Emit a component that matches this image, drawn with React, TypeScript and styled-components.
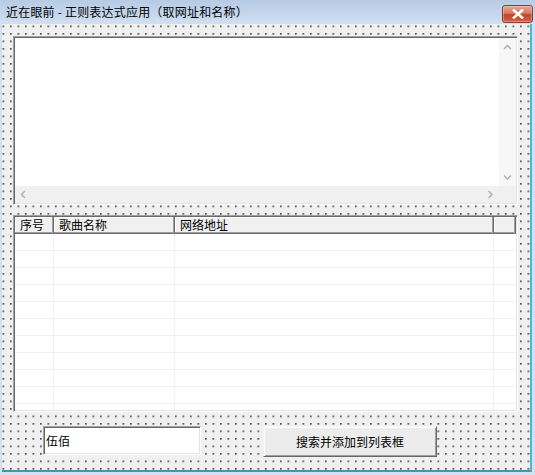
import React from "react";
import styled, { createGlobalStyle } from "styled-components";

const GlobalStyle = createGlobalStyle`
  html, body {
    margin: 0;
    padding: 0;
    background: #ffffff;
  }
  body {
    font-family: "Noto Sans CJK SC", "Liberation Sans", sans-serif;
    font-size: 12px;
    color: #000;
  }
`;

const columns = [
  { title: "序号", width: 39 },
  { title: "歌曲名称", width: 121 },
  { title: "网络地址", width: 319 },
  { title: "", width: 22 },
];

const rowCount = 11;

const Chevron = ({ dir }: { dir: "up" | "down" | "left" | "right" }) => {
  const paths = {
    up: "M1 5 L4.5 1.5 L8 5",
    down: "M1 1.5 L4.5 5 L8 1.5",
    left: "M5 1 L1.5 4.5 L5 8",
    right: "M1.5 1 L5 4.5 L1.5 8",
  };
  const vertical = dir === "up" || dir === "down";
  return (
    <svg
      width={vertical ? 9 : 7}
      height={vertical ? 7 : 9}
      viewBox={vertical ? "0 0 9 7" : "0 0 7 9"}
    >
      <path d={paths[dir]} fill="none" stroke="#b4b4b4" strokeWidth="1.6" />
    </svg>
  );
};

const App = () => {
  return (
    <>
      <GlobalStyle />
      <Window>
        <TitleBar>
          <Title>近在眼前 - 正则表达式应用（取网址和名称）</Title>
          <CloseButton>
            <svg width="12" height="10" viewBox="0 0 12 10">
              <path
                d="M2 1.5 L10 8.5 M10 1.5 L2 8.5"
                stroke="#ffffff"
                strokeWidth="2.6"
                strokeLinecap="square"
              />
            </svg>
          </CloseButton>
        </TitleBar>
        <Client>
          <MultiText>
            <TextContent />
            <VScroll>
              <ScrollButton>
                <Chevron dir="up" />
              </ScrollButton>
              <ScrollButton>
                <Chevron dir="down" />
              </ScrollButton>
            </VScroll>
            <HScroll>
              <ScrollButton>
                <Chevron dir="left" />
              </ScrollButton>
              <ScrollButton>
                <Chevron dir="right" />
              </ScrollButton>
            </HScroll>
            <Corner />
          </MultiText>

          <ListView>
            <HeaderRow>
              {columns.map((c, i) => (
                <HeaderCell key={i} $width={c.width}>
                  {c.title}
                </HeaderCell>
              ))}
            </HeaderRow>
            <ListBody>
              {Array.from({ length: rowCount }).map((_, r) => (
                <ListRow key={r}>
                  {columns.map((c, i) => (
                    <ListCell key={i} $width={c.width} $last={i === columns.length - 1} />
                  ))}
                </ListRow>
              ))}
            </ListBody>
          </ListView>

          <BottomRow>
            <TextBox>伍佰</TextBox>
            <Button>搜索并添加到列表框</Button>
          </BottomRow>
        </Client>
      </Window>
    </>
  );
};

const Window = styled.div`
  width: 535px;
  height: 475px;
  box-sizing: border-box;
  display: flex;
  flex-direction: column;
  background: #d3e0ef;
  padding: 0 3px 3px 2px;
  overflow: hidden;
`;

const TitleBar = styled.div`
  height: 24px;
  flex: none;
  display: flex;
  justify-content: space-between;
  align-items: flex-start;
  padding: 0 2px 0 6px;
  background: linear-gradient(to bottom, #b7cbe4 0%, #c3d5eb 50%, #d2e0f1 100%);
  margin: 0 -3px 0 -2px;
`;

const Title = styled.span`
  font-size: 12px;
  line-height: 24px;
  color: #000;
  white-space: nowrap;
  letter-spacing: 0.2px;
`;

const CloseButton = styled.div`
  width: 31px;
  height: 18px;
  margin-top: 5px;
  box-sizing: border-box;
  border: 1px solid #8b3b2e;
  border-radius: 3px;
  display: flex;
  align-items: center;
  justify-content: center;
  background: linear-gradient(to bottom, #e8a695 0%, #d67a63 45%, #c2432b 55%, #d0654c 100%);
  box-shadow: inset 0 0 0 1px rgba(255, 255, 255, 0.3);
`;

const Client = styled.div`
  flex: 1;
  box-sizing: border-box;
  display: flex;
  flex-direction: column;
  padding: 12px 0 0 11px;
  border-right: 2px solid #4eb3da;
  border-bottom: 2px solid #4a93b3;
  background-color: #f0f0f0;
  background-image: radial-gradient(circle at 0.9px 0.9px, #222222 0.55px, transparent 0.85px);
  background-size: 7.5px 7.5px;
  background-position: 0.5px 1.5px;
`;

const sunken = `
  box-sizing: border-box;
  border: 1px solid;
  border-color: #a0a0a0 #ffffff #ffffff #a0a0a0;
  box-shadow: inset 1px 1px 0 #696969, inset -1px -1px 0 #e3e3e3;
  padding: 1px;
`;

const MultiText = styled.div`
  ${sunken}
  width: 505px;
  height: 169px;
  flex: none;
  display: grid;
  grid-template-columns: 1fr 17px;
  grid-template-rows: 1fr 17px;
  background: #ffffff;
`;

const TextContent = styled.div`
  background: #ffffff;
`;

const ScrollButton = styled.div`
  width: 17px;
  height: 17px;
  display: flex;
  align-items: center;
  justify-content: center;
`;

const VScroll = styled.div`
  background: #f7f7f7;
  display: flex;
  flex-direction: column;
  justify-content: space-between;
  padding-top: 1px;
`;

const HScroll = styled.div`
  background: #f0f0f0;
  display: flex;
  justify-content: space-between;
`;

const Corner = styled.div`
  background: #f0f0f0;
`;

const ListView = styled.div`
  ${sunken}
  width: 505px;
  height: 197px;
  flex: none;
  margin-top: 10px;
  background: #ffffff;
  display: flex;
  flex-direction: column;
  overflow: hidden;
`;

const HeaderRow = styled.div`
  display: flex;
  height: 17px;
  flex: none;
  background: #f0f0f0;
  box-shadow: inset 0 -1px 0 #696969, inset 0 -2px 0 #a0a0a0;
`;

const HeaderCell = styled.div<{ $width: number }>`
  width: ${({ $width }) => $width}px;
  flex: none;
  box-sizing: border-box;
  padding-left: 5px;
  font-size: 12px;
  line-height: 15px;
  white-space: nowrap;
  box-shadow: inset -1px 0 0 #696969, inset -2px 0 0 #a0a0a0, inset 0 -1px 0 #696969,
    inset 0 -2px 0 #a0a0a0, inset 1px 1px 0 #ffffff;
`;

const ListBody = styled.div`
  flex: 1;
  overflow: hidden;
`;

const ListRow = styled.div`
  display: flex;
  height: 17px;
  box-sizing: border-box;
  border-bottom: 1px solid #f0f0f0;
`;

const ListCell = styled.div<{ $width: number; $last: boolean }>`
  width: ${({ $width }) => $width}px;
  flex: none;
  box-sizing: border-box;
  border-right: ${({ $last }) => ($last ? "none" : "1px solid #f0f0f0")};
`;

const BottomRow = styled.div`
  display: flex;
  align-items: flex-start;
  gap: 62px;
  margin-top: 14px;
  padding-left: 30px;
`;

const TextBox = styled.div`
  ${sunken}
  width: 158px;
  height: 29px;
  background: #ffffff;
  padding-left: 2px;
  font-size: 12px;
  line-height: 25px;
`;

const Button = styled.div`
  width: 174px;
  height: 31px;
  box-sizing: border-box;
  display: flex;
  align-items: center;
  justify-content: center;
  background: #ececec;
  border: 1px solid;
  border-color: #f4f4f4 #696969 #696969 #f4f4f4;
  box-shadow: inset 1px 1px 0 #ffffff, inset -1px -1px 0 #a0a0a0;
  font-size: 12px;
`;

export default App;
